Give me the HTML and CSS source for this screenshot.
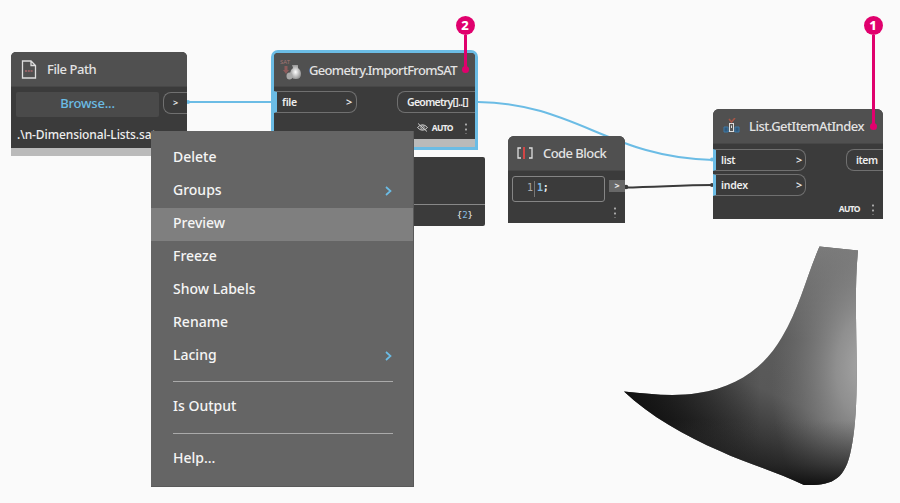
FILE: index.html
```html
<!DOCTYPE html>
<html lang="en">
<head>
<meta charset="utf-8">
<title>Node graph</title>
<link rel="stylesheet" href="styles.css">
</head>
<body>
<main class="canvas">
  <svg class="layer" viewBox="0 0 900 503">
    <defs>
      <linearGradient id="lit" gradientUnits="userSpaceOnUse" x1="735" y1="468" x2="787" y2="350">
        <stop offset="0" stop-color="#171717"/><stop offset=".3" stop-color="#383838"/><stop offset=".65" stop-color="#585858"/><stop offset="1" stop-color="#5b5b5b"/>
      </linearGradient>
      <linearGradient id="tip" gradientUnits="userSpaceOnUse" x1="624" y1="0" x2="760" y2="0">
        <stop offset="0" stop-color="#101010"/><stop offset="1" stop-color="#101010" stop-opacity="0"/>
      </linearGradient>
      <linearGradient id="base" gradientUnits="userSpaceOnUse" x1="0" y1="488" x2="0" y2="420">
        <stop offset="0" stop-color="#0c0c0c"/><stop offset=".35" stop-color="#262626" stop-opacity=".65"/><stop offset="1" stop-color="#444" stop-opacity="0"/>
      </linearGradient>
      <radialGradient id="shine" gradientUnits="userSpaceOnUse" cx="0" cy="0" r="1" gradientTransform="translate(864 365) rotate(4) scale(92 165)">
        <stop offset="0" stop-color="#a6a6a6"/><stop offset=".3" stop-color="#959595" stop-opacity=".9"/><stop offset=".65" stop-color="#808080" stop-opacity=".5"/><stop offset="1" stop-color="#707070" stop-opacity="0"/>
      </radialGradient>
      <linearGradient id="top" gradientUnits="userSpaceOnUse" x1="0" y1="246" x2="0" y2="340">
        <stop offset="0" stop-color="#7c7c7c"/><stop offset="1" stop-color="#7c7c7c" stop-opacity="0"/>
      </linearGradient>
      <clipPath id="surface"><path d="M819.5 246.5 858 250.5C855 280 856 315 856.5 350C857 385 857 422 851 450C845 480 832 486 804 485C775 471 745 463 720 451C685 436 650 416 624 391.5C650 394 674 397 698 393C737 387 765 367 782 337C799 309 806 278 819.5 246.5Z"/></clipPath>
    </defs>
    <g clip-path="url(#surface)">
      <path fill="url(#lit)" d="M610 235H880V500H610Z"/>
      <path fill="url(#top)" d="M610 235H880V500H610Z"/>
      <path fill="url(#shine)" d="M610 235H880V500H610Z"/>
      <path fill="url(#tip)" d="M610 235H880V500H610Z"/>
      <path fill="url(#base)" d="M610 400H880V500H610Z"/>
    </g>
    <g fill="none" stroke-width="2">
      <path stroke="#6bbce5" d="M186 102H273M478 102C575 103 610 158 713 160"/>
      <path stroke="#3a3a3a" d="M624 187.500C660 187 680 185 713 185"/>
    </g>
    <circle cx="188" cy="102" r="2" fill="#6bbce5"/><circle cx="626" cy="187" r="2.300" fill="#3a3a3a"/>
    <circle cx="712" cy="159.500" r="2" fill="#6bbce5"/><circle cx="712" cy="185" r="2" fill="#3a3a3a"/>
  </svg>

  <section class="node file-node">
    <header class="head">
      <svg class="icon doc" viewBox="0 0 16 19"><path d="M1.500 1H10L14.500 5.500V18H1.500ZM10 1V5.500H14.500" fill="none" stroke="#ddd" stroke-width="1.300"/><path d="M4 11H12" stroke="#a9676b" stroke-width="1.300" stroke-dasharray="2 .8"/></svg>
      <span class="title">File Path</span>
    </header>
    <div class="browse-row"><span class="browse">Browse...</span><span class="out-arrow">&gt;</span></div>
    <div class="path">.\n-Dimensional-Lists.sat</div>
    <div class="strip"></div>
  </section>

  <section class="node geometry-node">
    <header class="head">
      <svg class="icon sat" viewBox="0 0 24 24"><defs><radialGradient id="vase"><stop stop-color="#fff"/><stop offset="1" stop-color="#999"/></radialGradient></defs><text x="0" y="6" class="sat-text">SAT</text><path d="M6 8V13" stroke="#8c5b5b" stroke-width="3"/><path d="M3 12H9L6 16Z" fill="#8c5b5b"/><path d="M12 7H18V10Q21 12 21 16Q21 21 16 21Q10 21 10 15Q10 12 13 10Z" fill="url(#vase)"/><ellipse cx="9.500" cy="18" rx="3" ry="3.500" fill="#aaa"/></svg>
      <span class="title">Geometry.ImportFromSAT</span>
    </header>
    <div class="ports"><span class="port input file">file<b>&gt;</b></span><span class="port output geometry">Geometry[]..[]</span></div>
    <div class="foot">
      <svg class="eye" viewBox="0 0 11 9"><path d="M.5 4.500Q5.500-1 10.500 4.500Q5.500 10 .5 4.500M1 .5 10 8.500" fill="none" stroke="#ccc"/><circle cx="5.500" cy="4.500" r="1.700" fill="none" stroke="#ccc"/></svg>
      <span class="auto">AUTO</span><i class="dots"></i>
    </div>
    <div class="strip"></div>
  </section>

  <aside class="bubble"><div class="bubble-body"></div><div class="count">{<em>2</em>}</div></aside>

  <section class="node code-node">
    <header class="head">
      <svg class="icon brackets" viewBox="0 0 16 14"><path d="M4 2H1V12H4M12 2H15V12H12" fill="none" stroke="#ddd" stroke-width="1.300"/><path d="M7 1V13" stroke="#d34545" stroke-width="2"/></svg>
      <span class="title">Code Block</span>
    </header>
    <div class="code-row"><div class="editor"><span class="line">1</span><span class="code"><em>1</em>;</span></div><span class="code-out">&gt;</span></div>
    <div class="foot"><i class="dots"></i></div>
  </section>

  <section class="node list-node">
    <header class="head">
      <svg class="icon pick" viewBox="0 0 17 16"><path d="M1 9H5V14H1ZM12 9H16V14H12ZM5 13.500H12" fill="#31597b" stroke="#3f78a4"/><rect x="6.500" y="5.500" width="4" height="8" fill="#555" stroke="#ddd"/><path d="M8.500 7.500V10" stroke="#ddd"/><path d="M6 1 8.500 4 12 0" fill="none" stroke="#a85545" stroke-width="1.500"/></svg>
      <span class="title">List.GetItemAtIndex</span>
    </header>
    <div class="ports"><div class="inputs"><span class="port input">list<b>&gt;</b></span><span class="port input">index<b>&gt;</b></span></div><span class="port output item">item</span></div>
    <div class="foot"><span class="auto">AUTO</span><i class="dots"></i></div>
  </section>

  <nav class="menu">
    <div class="entry">Delete</div>
    <div class="entry">Groups<svg class="chev" viewBox="0 0 7 10"><path d="M1 1 5.500 5 1 9"/></svg></div>
    <div class="entry active">Preview</div>
    <div class="entry">Freeze</div>
    <div class="entry">Show Labels</div>
    <div class="entry">Rename</div>
    <div class="entry">Lacing<svg class="chev" viewBox="0 0 7 10"><path d="M1 1 5.500 5 1 9"/></svg></div>
    <hr>
    <div class="entry">Is Output</div>
    <hr>
    <div class="entry">Help...</div>
  </nav>

  <div class="pin pin-two"><span class="num">2</span><span class="stem"></span><span class="tip"></span></div>
  <div class="pin pin-one"><span class="num">1</span><span class="stem"></span><span class="tip"></span></div>
</main>
</body>
</html>
```
FILE: styles.css
```css
* { box-sizing: border-box; }
body { margin: 0; background: #fafafa; font-family: "Noto Sans", sans-serif; color: #eee; }
.canvas { position: relative; width: 900px; height: 503px; overflow: hidden; }
.layer { position: absolute; inset: 0; width: 900px; height: 503px; }
.node { position: absolute; display: flex; flex-direction: column; background: #3b3b3b; border-radius: 6px 6px 0 0; overflow: hidden; }
.head { display: flex; align-items: center; height: 35px; flex: none; background: #505050; border-bottom: 1px solid #474747; }
.icon { flex: none; display: block; }
.title { font-size: 13px; font-weight: 500; line-height: 20px; white-space: nowrap; color: #e3e3e3; }
.strip { background: #bababa; height: 8px; flex: none; }

.file-node { left: 11px; top: 52px; width: 176px; height: 104px; border-radius: 5px 5px 0 0; }
.file-node .head { padding-left: 10px; }
.doc { width: 16px; height: 19px; margin-right: 10px; }
.file-node .title { letter-spacing: -.45px; }
.browse-row { display: flex; justify-content: space-between; padding: 5px 0 0 5px; }
.browse { width: 143px; height: 25px; line-height: 23px; background: #4a4a4a; color: #6bbce5; text-align: center; font-size: 13px; font-weight: 500; letter-spacing: -.2px; border-radius: 2px; }
.out-arrow { width: 24px; height: 22px; border: 1px solid #707070; border-right: 0; border-radius: 8px 0 0 8px; font-size: 9px; font-weight: 600; line-height: 20px; text-align: center; }
.path { height: 31px; line-height: 35px; padding-left: 6px; font-size: 12px; font-weight: 500; white-space: nowrap; letter-spacing: -.1px; }

.geometry-node { left: 271px; top: 50px; width: 207px; height: 100px; border: 3px solid #6bbce5; border-radius: 7px 7px 0 0; }
.geometry-node .head { padding-left: 6px; height: 34px; }
.geometry-node .title { letter-spacing: -.68px; }
.sat { width: 24px; height: 24px; margin-right: 5px; }
.sat-text { font-size: 6px; fill: #a07474; }
.ports { display: flex; justify-content: space-between; align-items: flex-start; padding-top: 4px; }
.port { display: flex; justify-content: space-between; align-items: center; height: 22px; font-size: 10.500px; font-weight: 600; letter-spacing: -.25px; border: 1px solid #707070; }
.input { width: 93px; padding: 0 4px 1px 5px; border-left: 3px solid #6bbce5; border-radius: 0 8px 8px 0; }
.input b { font-size: 11px; font-weight: 600; }
.file { width: 83px; }
.output { border-right: 0; border-radius: 8px 0 0 8px; }
.geometry { width: 78px; padding-left: 9px; letter-spacing: -.7px; }
.foot { display: flex; align-items: center; justify-content: flex-end; flex: 1; padding-right: 8px; }
.auto { font-size: 8.500px; font-weight: 700; margin-right: 12px; letter-spacing: -.6px; }
.eye { width: 11px; height: 9px; margin: 3px 4px 0 0; }
.geometry-node .auto, .geometry-node .dots { margin-top: 3px; }
.dots { width: 2px; height: 12px; background: radial-gradient(circle, #aaa 1px, transparent 1.200px) 0 0 / 2px 5px; }
.file-node, .geometry-node { z-index: 1; }

.bubble { position: absolute; left: 400px; top: 157px; width: 85px; height: 69px; background: #3b3b3b; border-radius: 2px; }
.bubble-body { height: 48px; border-bottom: 1px solid #888; }
.count { text-align: right; padding-right: 12px; font: 9px/21px "DejaVu Sans Mono", monospace; }
em { font-style: normal; color: #83bde5; }

.code-node { left: 508px; top: 136px; width: 117px; height: 87px; }
.code-node .head { padding-left: 9px; }
.code-node .title { letter-spacing: -.55px; }
.brackets { width: 16px; height: 14px; margin-right: 10px; }
.code-row { display: flex; align-items: flex-start; justify-content: space-between; padding: 5px 0 0 4px; }
.editor { display: flex; align-items: flex-start; width: 93px; height: 26px; padding: 4px 0 0 14px; border: 1px solid #858585; border-radius: 3px; font: 10px/14px "DejaVu Sans Mono", monospace; }
.line { width: 8px; height: 16px; border-right: 1px solid #777; color: #aaa; }
.code { padding-left: 2px; letter-spacing: -.2px; font-weight: 700; }
.code-out { width: 16px; height: 12px; margin-top: 4px; background: #686868; text-align: center; font-size: 9px; font-weight: 700; line-height: 11px; }
.code-node .foot { padding: 0 9px 2px 0; }

.list-node { left: 713px; top: 109px; width: 170px; height: 110px; }
.list-node .head { padding-left: 10px; }
.list-node .title { letter-spacing: -.5px; }
.list-node .foot { padding: 2px 9px 0 0; }
.pick { width: 17px; height: 16px; margin-right: 9px; }
.inputs { display: flex; flex-direction: column; gap: 3px; }
.list-node .ports { padding-top: 5px; }
.list-node .input { padding-right: 3px; }
.item { width: 37px; padding-left: 9px; letter-spacing: -.5px; }

.menu { position: absolute; z-index: 2; left: 151px; top: 131px; width: 263px; height: 356px; padding-top: 11px; background: #656565; border: solid #595959; border-width: 0 1px 1px 0; }
.entry { display: flex; align-items: center; justify-content: space-between; height: 33px; padding: 0 21px 4px 22px; font-size: 14px; line-height: 19px; font-weight: 500; color: #f5f5f5; }
.active { background: #7f7f7f; }
.menu hr { width: 220px; height: 1px; margin: 8px 0 9px 22px; background: #aaa; border: 0; }
.entry + hr + .entry + hr { margin-top: 9px; }
.chev { width: 7px; height: 10px; margin-top: 3px; fill: none; stroke: #6bbce5; stroke-width: 1.700; }

.pin { position: absolute; z-index: 3; width: 20px; display: flex; flex-direction: column; align-items: center; }
.pin-two { left: 455px; top: 16px; height: 57px; }
.pin-one { left: 863px; top: 16px; height: 114px; }
.num { width: 19px; height: 19px; flex: none; border-radius: 50%; background: #e0006d; color: #fff; font-size: 13px; font-weight: 800; line-height: 18px; text-align: center; }
.stem { flex: 1; width: 3px; background: #e0006d; }
.tip { width: 7px; height: 7px; margin-top: -4px; border-radius: 50%; background: #e0006d; }
```
